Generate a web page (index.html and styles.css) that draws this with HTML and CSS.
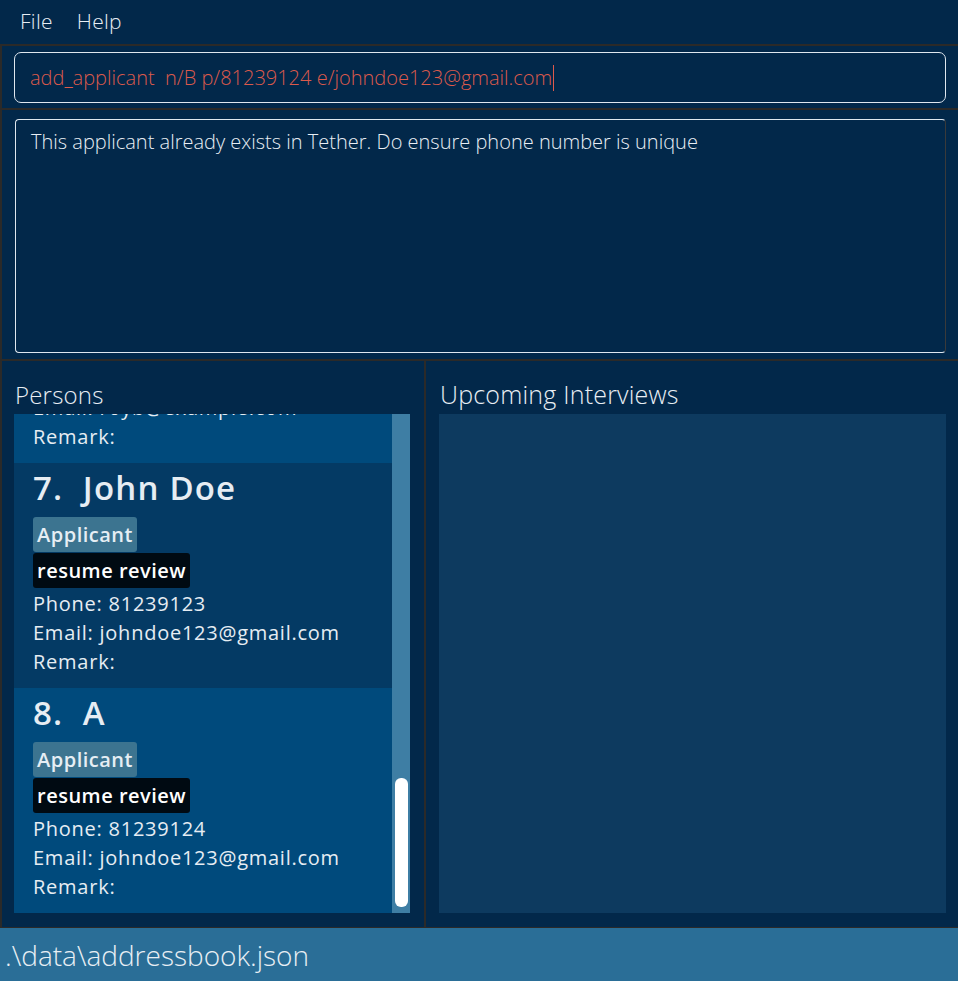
FILE: index.html
```html
<!DOCTYPE html>
<html lang="en">
<head>
<meta charset="utf-8">
<title>Tether</title>
<link rel="stylesheet" href="styles.css">
</head>
<body>
<div class="window">
  <nav class="menubar">
    <span class="menu-item">File</span>
    <span class="menu-item">Help</span>
  </nav>

  <section class="command-pane">
    <div class="command-box">
      <span class="command-text">add_applicant&nbsp; n/B p/81239124 e/johndoe123@gmail.com</span><span class="caret"></span>
    </div>
  </section>

  <section class="result-pane">
    <div class="result-box">This applicant already exists in Tether. Do ensure phone number is unique</div>
  </section>

  <main class="lower">
    <section class="persons-panel">
      <h2 class="panel-title">Persons</h2>
      <div class="list-frame">
        <div class="list-viewport">
          <div class="list-scroll">
            <article class="card card-odd">
              <div class="card-name">6.&nbsp; Roy Balakrishnan</div>
              <div class="tags">
                <span class="tag tag-role">Applicant</span>
                <span class="tag tag-stage">resume review</span>
              </div>
              <div class="detail">Phone: 92624417</div>
              <div class="detail">Email: royb@example.com</div>
              <div class="detail">Remark:</div>
            </article>
            <article class="card card-even">
              <div class="card-name">7.&nbsp; John Doe</div>
              <div class="tags">
                <span class="tag tag-role">Applicant</span>
                <span class="tag tag-stage">resume review</span>
              </div>
              <div class="detail">Phone: 81239123</div>
              <div class="detail">Email: johndoe123@gmail.com</div>
              <div class="detail">Remark:</div>
            </article>
            <article class="card card-odd">
              <div class="card-name">8.&nbsp; A</div>
              <div class="tags">
                <span class="tag tag-role">Applicant</span>
                <span class="tag tag-stage">resume review</span>
              </div>
              <div class="detail">Phone: 81239124</div>
              <div class="detail">Email: johndoe123@gmail.com</div>
              <div class="detail">Remark:</div>
            </article>
          </div>
        </div>
        <div class="scrollbar"><div class="thumb"></div></div>
      </div>
    </section>
    <div class="vdivider"></div>
    <section class="interviews-panel">
      <h2 class="panel-title">Upcoming Interviews</h2>
      <div class="interviews-box"></div>
    </section>
  </main>

  <footer class="statusbar">.\data\addressbook.json</footer>
</div>
</body>
</html>
```

FILE: styles.css
```css
* { box-sizing: border-box; }

html, body {
  margin: 0;
  padding: 0;
  background: #02284a;
}

body {
  font-family: "Open Sans", "Noto Sans", sans-serif;
  color: #e6edf3;
}

.window {
  width: 958px;
  height: 981px;
  display: flex;
  flex-direction: column;
  background: #02284a;
  overflow: hidden;
}

/* menu */
.menubar {
  height: 46px;
  display: flex;
  align-items: center;
  padding-left: 20px;
  padding-bottom: 2px;
  gap: 24px;
  font-size: 21px;
  font-weight: 300;
  letter-spacing: 0.3px;
  color: #e8eef4;
  border-bottom: 2px solid #2b2a29;
  flex: none;
}

/* command */
.command-pane {
  flex: none;
  height: 64px;
  padding: 6px 12px 5px 12px;
  border-left: 2px solid #2b2a29;
  border-bottom: 2px solid #2b2a29;
}

.command-box {
  height: 51px;
  border: 1.5px solid #dfe7ef;
  border-radius: 7px;
  display: flex;
  align-items: center;
  padding-left: 15px;
  font-size: 20px;
  font-weight: 300;
  color: #dc5a4c;
}

.command-text { white-space: pre; }

.caret {
  display: inline-block;
  width: 1px;
  height: 26px;
  background: #dc5a4c;
  margin-left: 1px;
}

/* result */
.result-pane {
  flex: none;
  height: 251px;
  padding: 9px 12px 6px 13px;
  border-left: 2px solid #2b2a29;
  border-bottom: 2px solid #2b2a29;
}

.result-box {
  height: 234px;
  border: 1.5px solid #dfe7ef;
  border-right-color: #3a3a3a;
  border-radius: 4px;
  padding: 8px 15px;
  font-size: 20px;
  font-weight: 300;
  color: #e8eef4;
}

/* lower */
.lower {
  flex: none;
  height: 567px;
  display: flex;
  border-left: 2px solid #2b2a29;
  border-bottom: 1px solid #2b2a29;
}

.panel-title {
  margin: 0;
  height: 35px;
  line-height: 31px;
  font-size: 24px;
  font-weight: 300;
  color: #e8eef4;
  flex: none;
  white-space: nowrap;
}

.persons-panel {
  width: 422px;
  padding: 18px 12px 13px 12px;
  display: flex;
  flex-direction: column;
}

.persons-panel .panel-title { padding-left: 1px; letter-spacing: 0.2px; }

.vdivider {
  width: 2px;
  background: #2b2a29;
  flex: none;
}

.interviews-panel {
  flex: 1;
  padding: 18px 12px 13px 13px;
  display: flex;
  flex-direction: column;
}

.interviews-panel .panel-title {
  padding-left: 1px;
  font-size: 25px;
  letter-spacing: 0.2px;
}

.interviews-box {
  height: 499px;
  background: #0d3a5f;
}

.list-frame {
  height: 499px;
  display: flex;
}

.list-viewport {
  width: 378px;
  overflow: hidden;
}

.list-scroll {
  margin-top: -176px;
}

.scrollbar {
  width: 18px;
  background: #3e7ea4;
  display: flex;
  flex-direction: column;
  justify-content: flex-end;
  padding: 0 2px 6px 3px;
}

.thumb {
  height: 129px;
  background: #ffffff;
  border-radius: 6px;
}

/* cards */
.card {
  height: 225px;
  padding: 3px 10px 0 19px;
}

.card-odd { background: #004a7c; }
.card-even { background: #043a64; }

.card-name {
  height: 44px;
  line-height: 44px;
  font-size: 33px;
  font-weight: 600;
  letter-spacing: 1.2px;
  color: #e6edf3;
  white-space: pre;
}

.tags {
  margin-top: 7px;
  display: flex;
  flex-direction: column;
  align-items: flex-start;
  gap: 1px;
}

.tag {
  height: 35px;
  line-height: 35px;
  padding: 0 4px;
  border-radius: 3px;
  font-size: 20px;
  font-weight: 600;
  letter-spacing: 0.5px;
}

.tag-role {
  background: #3c7490;
  color: #e6eef4;
}

.tag-stage {
  background: #000a12;
  color: #ffffff;
}

.detail {
  height: 29px;
  line-height: 29px;
  font-size: 20px;
  letter-spacing: 0.75px;
  color: #e6edf3;
  white-space: nowrap;
}

.tags + .detail { margin-top: 1px; }

/* status */
.statusbar {
  flex: 1;
  background: #2a6e97;
  display: flex;
  align-items: center;
  padding-left: 5px;
  font-size: 28px;
  font-weight: 300;
  color: #e8eef4;
}
```
